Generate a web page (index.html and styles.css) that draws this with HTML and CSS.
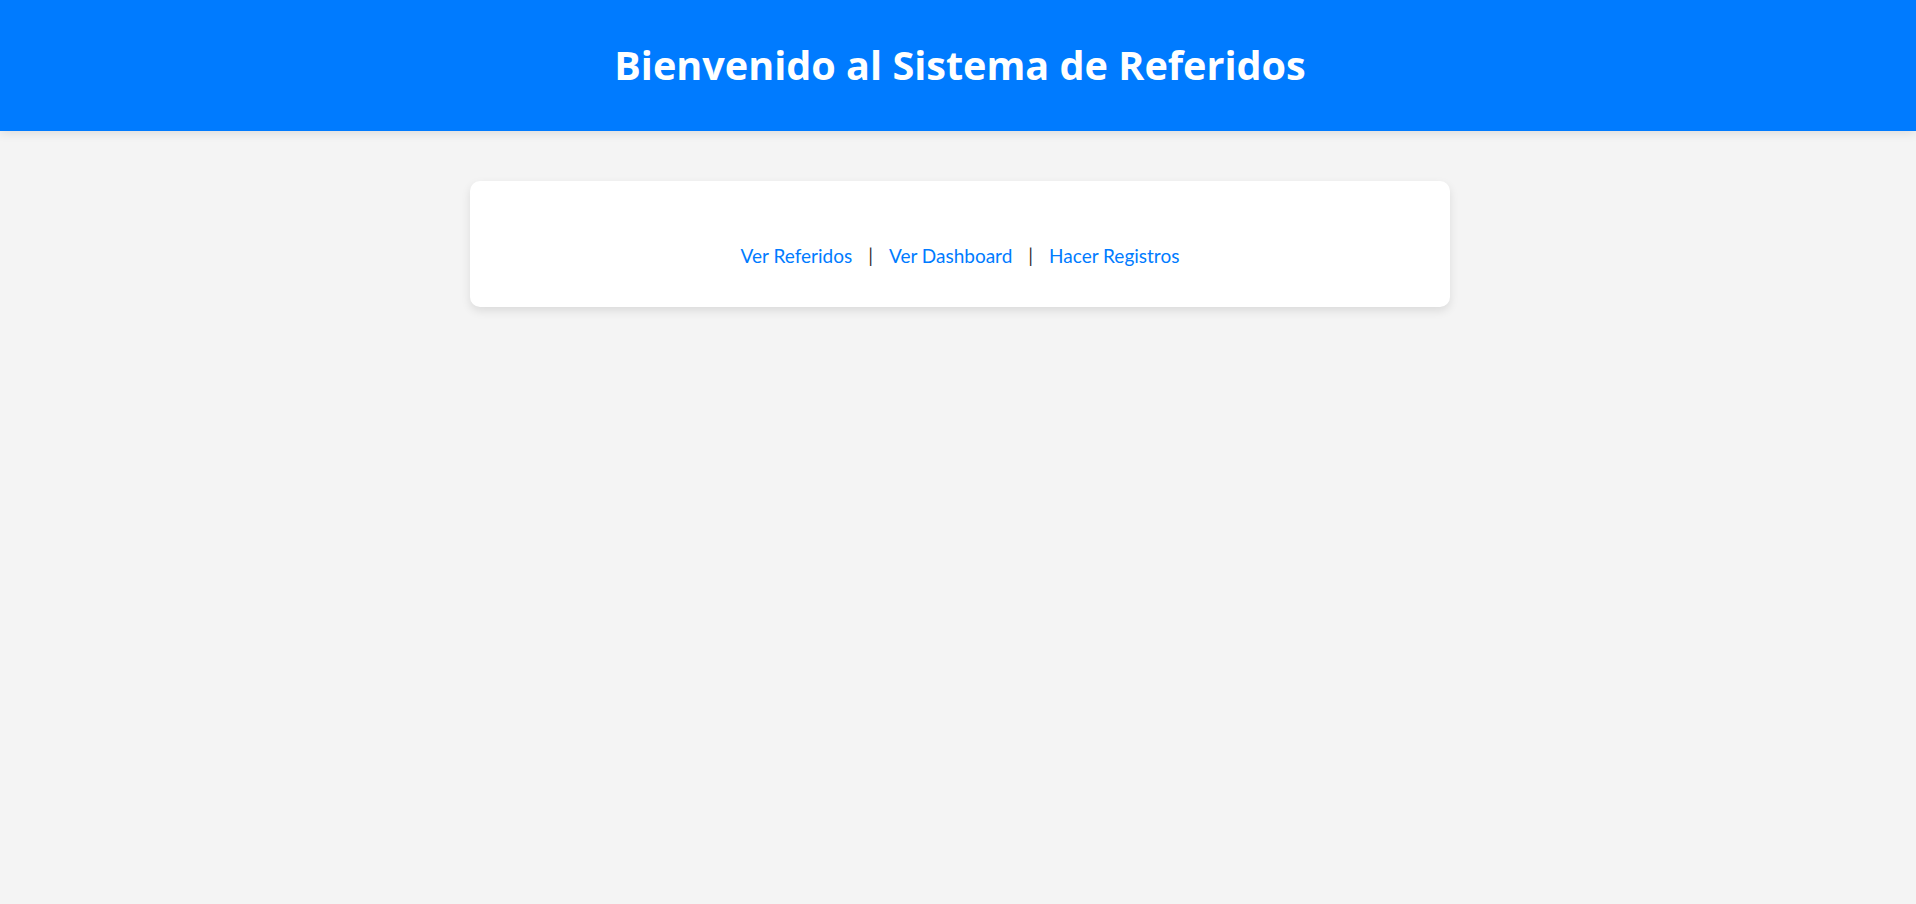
FILE: index.html
```html
<!DOCTYPE html>
<html lang="es">
<head>
<meta charset="utf-8">
<title>Sistema de Referidos</title>
<link rel="stylesheet" href="styles.css">
</head>
<body>
<header class="site-header">
  <h1 class="site-title">Bienvenido al Sistema de Referidos</h1>
</header>
<main class="main">
  <div class="card">
    <nav class="links">
      <a class="link" href="#">Ver Referidos</a>
      <span class="sep">|</span>
      <a class="link" href="#">Ver Dashboard</a>
      <span class="sep">|</span>
      <a class="link" href="#">Hacer Registros</a>
    </nav>
  </div>
</main>
</body>
</html>
```
FILE: styles.css
```css
html, body {
  margin: 0;
  padding: 0;
}
body {
  background: #f4f4f4;
  font-family: "Lato", "Open Sans", sans-serif;
  color: #333;
  min-height: 904px;
}
.site-header {
  background: #007bff;
  height: 131px;
  padding-left: 4px;
  display: flex;
  align-items: center;
  justify-content: center;
  box-shadow: 0 2px 10px rgba(0, 0, 0, 0.1);
}
.site-title {
  margin: 0;
  color: #fff;
  font-family: "Open Sans", "Lato", sans-serif;
  font-size: 39.6px;
  font-weight: 700;
  line-height: 1;
}
.main {
  display: flex;
  justify-content: center;
  padding-top: 50px;
  padding-left: 4px;
}
.card {
  width: 980px;
  box-sizing: border-box;
  background: #fff;
  border-radius: 10px;
  box-shadow: 0 4px 10px rgba(0, 0, 0, 0.1);
  padding: 62px 20px 39px;
}
.links {
  display: flex;
  justify-content: center;
  align-items: center;
  gap: 16px;
  font-size: 19px;
  line-height: 25px;
}
.link {
  color: #007bff;
  text-decoration: none;
}
.sep {
  color: #333;
}
```
